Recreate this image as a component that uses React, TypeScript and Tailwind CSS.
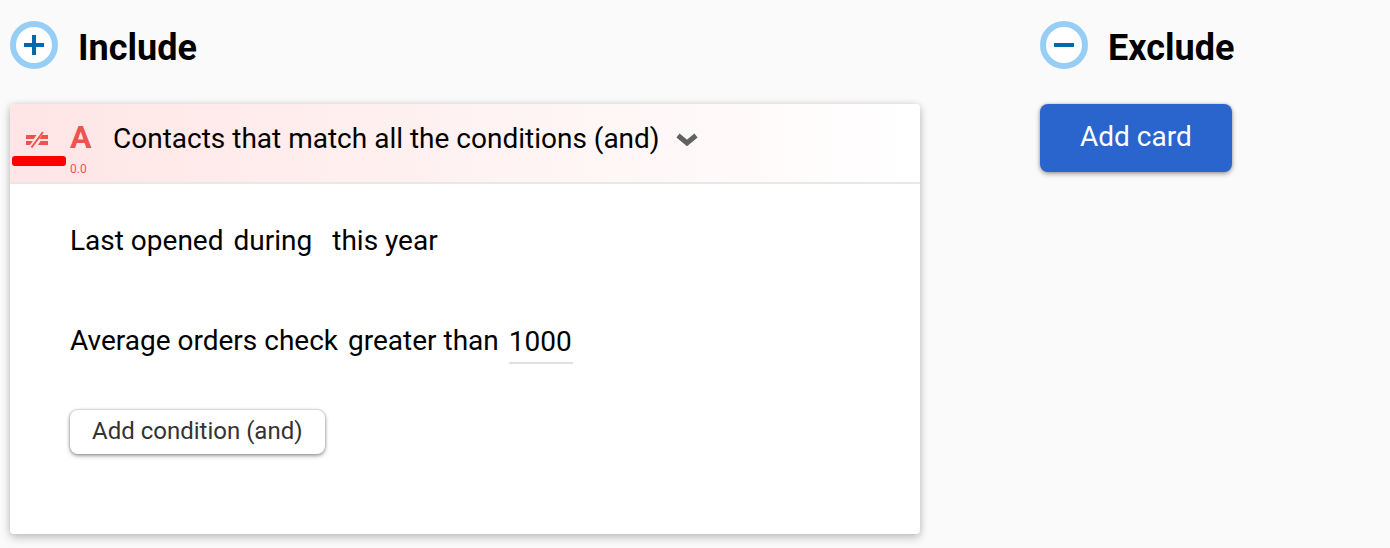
import { useState } from "react";

function RoundIcon({ plus = false }: { plus?: boolean }) {
  return (
    <svg viewBox="0 0 48 48" className="size-12 shrink-0" aria-hidden="true">
      <circle cx="24" cy="24" r="21" fill="#fff" stroke="#97cef6" strokeWidth="6" />
      <path d={plus ? "M14 24h20M24 14v20" : "M14 24h20"} stroke="#0069aa" strokeWidth="4" />
    </svg>
  );
}

function SectionTitle({ title, plus }: { title: string; plus?: boolean }) {
  return (
    <div className="flex h-12 items-center gap-5">
      <RoundIcon plus={plus} />
      <h2 className="pt-[6px] text-4xl font-bold">{title}</h2>
    </div>
  );
}

function NotEqualIcon() {
  return (
    <svg viewBox="0 0 22 18" className="h-[18px] w-[22px]" fill="#ef5350" aria-hidden="true">
      <path d="M0 4h10.5L7.8 8H0zM0 10h6.8L4 14H0z" />
      <path d="M16 4h6v4h-8.5zM14.5 10H22v4H12z" />
      <path d="M5.5 16.5L17 1" stroke="#ef5350" strokeWidth="2" />
    </svg>
  );
}

export default function App() {
  const [value, setValue] = useState("1000");

  return (
    <div className="min-h-screen bg-[#fafafa] px-[10px] pt-[21px] pb-[14px] font-[Roboto,sans-serif] text-black">
      <main className="grid grid-cols-[91fr_34fr] items-start gap-[120px]">
        <section className="flex flex-col gap-[35px]">
          <SectionTitle title="Include" plus />
          <article className="rounded bg-white pb-20 shadow-[0_4px_10px_rgba(0,0,0,0.2),0_0_6px_rgba(0,0,0,0.12)]">
            <header className="relative flex h-20 items-start rounded-t border-b-2 border-[#e8e8e8] bg-linear-to-r from-[#ffe5e5] to-white pt-[15px] pl-4">
              <button type="button" aria-label="Negate card" className="mt-3 flex w-11 shrink-0">
                <NotEqualIcon />
              </button>
              <span className="absolute top-[52px] left-[2px] h-[10px] w-[54px] rounded-[3px] bg-[#ff0000]" />
              <div className="flex w-[43px] flex-col text-[#ef5350]">
                <span className="text-[32px] leading-9 font-bold">A</span>
                <span className="mt-[6px] text-xs leading-4">0.0</span>
              </div>
              <label className="mt-[2px] flex items-center gap-4">
                <select aria-label="Match rule" className="appearance-none bg-transparent text-[28px] leading-9">
                  <option>Contacts that match all the conditions (and)</option>
                </select>
                <svg viewBox="0 0 22 13" className="h-[13px] w-[22px]" fill="none" aria-hidden="true">
                  <path d="M2 2.5L11 10l9-7.5" stroke="#616161" strokeWidth="5" />
                </svg>
              </label>
            </header>
            <div className="flex flex-col items-start px-[60px] pt-[37px] text-[28px]">
              <p className="flex h-[100px] items-start leading-10">
                <span className="mr-[10px]">Last opened</span>
                <span className="mr-5">during</span>
                <span>this year</span>
              </p>
              <div className="flex h-[89px] items-start gap-[10px] leading-10">
                <span>Average orders check</span>
                <label htmlFor="amount">greater than</label>
                <input
                  id="amount"
                  value={value}
                  onChange={(event) => setValue(event.target.value)}
                  className="h-[43px] w-16 border-b-2 border-[#e0e0e0] bg-transparent pb-px outline-none"
                />
              </div>
              <button
                type="button"
                className="h-11 rounded-lg bg-white px-[22px] pb-[2px] text-2xl text-[#333] shadow-[0_2px_4px_rgba(0,0,0,0.35),0_0_3px_rgba(0,0,0,0.3)]"
              >
                Add condition (and)
              </button>
            </div>
          </article>
        </section>
        <section className="flex flex-col items-start gap-[35px]">
          <SectionTitle title="Exclude" />
          <button
            type="button"
            className="h-[68px] rounded-lg bg-[#2965cc] px-10 pb-[2px] text-[28px] text-white shadow-[0_2px_5px_rgba(0,0,0,0.35),0_0_3px_rgba(0,0,0,0.2)]"
          >
            Add card
          </button>
        </section>
      </main>
    </div>
  );
}
